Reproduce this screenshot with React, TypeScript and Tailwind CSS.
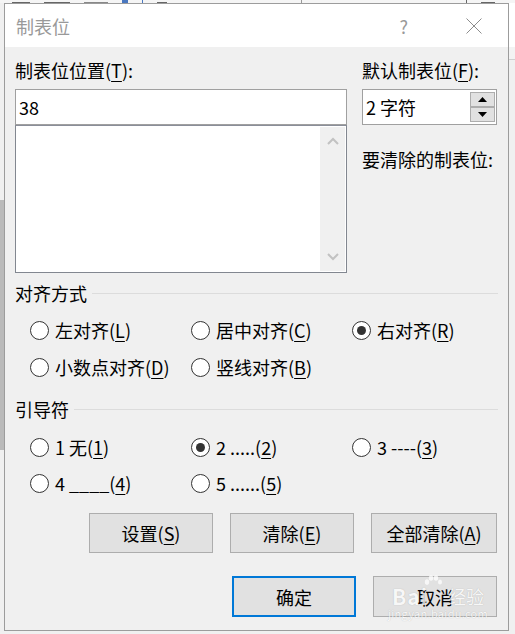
import React from "react";

const FONT = '"Noto Sans CJK SC", "Microsoft YaHei", sans-serif';

function Radio({ checked = false, children }: { checked?: boolean; children: React.ReactNode }) {
  return (
    <div className="flex h-[26px] items-center">
      <span className="flex h-[19px] w-[19px] shrink-0 items-center justify-center rounded-full border border-[#333333] bg-white">
        {checked && <span className="h-[9px] w-[9px] rounded-full bg-[#333333]" />}
      </span>
      <span className="ml-[6px] whitespace-pre text-[18px] leading-[22px] text-black">{children}</span>
    </div>
  );
}

function Btn({ w, focused = false, children }: { w: string; focused?: boolean; children: React.ReactNode }) {
  return (
    <div
      className={`flex items-center justify-center bg-[#e1e1e1] text-[18px] leading-[22px] text-black ${w} ${
        focused ? "border-2 border-[#0078d7]" : "border border-[#adadad]"
      }`}
    >
      {children}
    </div>
  );
}

function GroupHeader({ label }: { label: string }) {
  return (
    <div className="flex h-[22px] items-center pl-[10px] pr-[10px]">
      <span className="text-[18px] leading-[22px] text-black">{label}</span>
      <span className="ml-[5px] h-px flex-1 bg-[#dcdcdc]" />
    </div>
  );
}

const U = ({ children }: { children: React.ReactNode }) => (
  <span className="underline decoration-1 underline-offset-[3px]">{children}</span>
);

export default function App() {
  return (
    <div className="relative flex h-[634px] w-[515px] flex-col overflow-hidden bg-[#f0f0f0]" style={{ fontFamily: FONT }}>
      {/* bits of the window behind */}
      <div className="flex h-[3px] items-end gap-[14px] bg-[#f5f5f5] pl-[12px]">
        <span className="h-px w-[18px] bg-[#666]" />
        <span className="h-px w-[26px] bg-[#666]" />
        <span className="h-px w-[24px] bg-[#888]" />
        <span className="h-[3px] w-[6px] bg-[#4a78c0]" />
        <span className="h-[3px] w-px bg-[#4a78c0]" />
        <span className="h-px w-[10px] bg-[#666]" />
        <span className="ml-[120px] h-[3px] w-px bg-[#999]" />
        <span className="ml-[150px] h-[3px] w-px bg-[#666]" />
        <span className="h-px w-[14px] bg-[#666]" />
      </div>
      <div className="flex flex-1">
        <div className="flex w-[4px] flex-col bg-[#f0f0f0]">
          <span className="mt-[197px] h-[250px] bg-[#bababa]" />
        </div>

        <div className="relative flex h-[628px] w-[505px] flex-col border border-[#9c9c9c] bg-[#f0f0f0]">
          {/* title bar */}
          <div className="flex h-[43px] items-center bg-white pl-[11px]">
            <span className="text-[18px] leading-[24px] text-[#999999]">制表位</span>
            <span className="ml-auto text-[18px] leading-[24px] text-[#999999]">?</span>
            <svg className="ml-[58px] mr-[26px]" width="16" height="16" viewBox="0 0 16 16">
              <path d="M0.5 0.5 L15.5 15.5 M15.5 0.5 L0.5 15.5" stroke="#8c8c8c" strokeWidth="1" fill="none" />
            </svg>
          </div>

          <div className="flex flex-1 flex-col pt-[12px]">
            <div className="flex pl-[10px]">
              <div className="flex w-[332px] flex-col">
                <span className="text-[18px] leading-[22px] text-black">
                  制表位位置(<U>T</U>):
                </span>
                <div className="mt-[8px] flex h-[36px] items-center border border-[#a0a0a0] bg-white pl-[3px] text-[18px] text-black">
                  38
                </div>
                <div className="flex h-[148px] border border-[#828790] border-t-[#8a8e99] bg-white p-px">
                  <div className="flex-1" />
                  <div className="flex w-[25px] flex-col items-center justify-between bg-[#f0f0f0] py-[10px]">
                    <svg width="12" height="8" viewBox="0 0 12 8">
                      <path d="M1 7 L6 2 L11 7" stroke="#c2c2c2" strokeWidth="2" fill="none" />
                    </svg>
                    <svg width="12" height="8" viewBox="0 0 12 8">
                      <path d="M1 1 L6 6 L11 1" stroke="#c2c2c2" strokeWidth="2" fill="none" />
                    </svg>
                  </div>
                </div>
              </div>

              <div className="ml-[15px] flex w-[135px] flex-col">
                <span className="whitespace-nowrap text-[18px] leading-[22px] text-black">
                  默认制表位(<U>F</U>):
                </span>
                <div className="mt-[8px] flex h-[36px] items-center border border-[#a0a0a0] bg-white pl-[3px] pr-px">
                  <span className="flex-1 text-[18px] text-black">2 字符</span>
                  <div className="flex flex-col">
                    <span className="flex h-[15px] w-[25px] items-center justify-center border border-[#adadad] bg-[#e1e1e1]">
                      <svg width="9" height="5" viewBox="0 0 9 5"><path d="M0 5 L4.5 0 L9 5 Z" fill="#000" /></svg>
                    </span>
                    <span className="flex h-[15px] w-[25px] items-center justify-center border border-[#adadad] bg-[#e1e1e1]">
                      <svg width="9" height="5" viewBox="0 0 9 5"><path d="M0 0 L9 0 L4.5 5 Z" fill="#000" /></svg>
                    </span>
                  </div>
                </div>
                <span className="mt-[23px] whitespace-nowrap text-[18px] leading-[22px] text-black">要清除的制表位:</span>
              </div>
            </div>

            <div className="mt-[9px]">
              <GroupHeader label="对齐方式" />
            </div>
            <div className="mt-[13px] grid grid-cols-[161px_161px_161px] gap-y-[11px] pl-[25px]">
              <Radio>左对齐(<U>L</U>)</Radio>
              <Radio>居中对齐(<U>C</U>)</Radio>
              <Radio checked>右对齐(<U>R</U>)</Radio>
              <Radio>小数点对齐(<U>D</U>)</Radio>
              <Radio>竖线对齐(<U>B</U>)</Radio>
            </div>

            <div className="mt-[18px]">
              <GroupHeader label="引导符" />
            </div>
            <div className="mt-[14px] grid grid-cols-[161px_161px_161px] gap-y-[10px] pl-[25px]">
              <Radio>1 无(<U>1</U>)</Radio>
              <Radio checked>2 .....(<U>2</U>)</Radio>
              <Radio>3 ----(<U>3</U>)</Radio>
              <Radio>4 ____(<U>4</U>)</Radio>
              <Radio>5 ......(<U>5</U>)</Radio>
            </div>

            <div className="mt-[17px] flex justify-end gap-[17px] pr-[11px]">
              <Btn w="h-[40px] w-[124px]">设置(<U>S</U>)</Btn>
              <Btn w="h-[40px] w-[124px]">清除(<U>E</U>)</Btn>
              <Btn w="h-[40px] w-[126px]">全部清除(<U>A</U>)</Btn>
            </div>
            <div className="mt-[23px] flex justify-end gap-[17px] pr-[11px]">
              <Btn w="h-[41px] w-[124px]" focused>确定</Btn>
              <Btn w="h-[41px] w-[124px]">取消</Btn>
            </div>
          </div>

          {/* watermark over the cancel button */}
          <div className="pointer-events-none absolute left-[387px] top-[571px] flex w-[92px] flex-col items-center text-white opacity-75 [text-shadow:0_0_1px_rgba(0,0,0,0.3)]">
            <svg width="18" height="14" viewBox="0 0 18 14" className="mb-[-4px] ml-[-10px]">
              <ellipse cx="3" cy="7" rx="2.2" ry="2.8" fill="#fff" />
              <ellipse cx="7" cy="3" rx="2.2" ry="2.8" fill="#fff" />
              <ellipse cx="12" cy="3" rx="2.2" ry="2.8" fill="#fff" />
              <ellipse cx="16" cy="7" rx="2" ry="2.6" fill="#fff" />
            </svg>
            <div className="flex w-full items-end justify-between">
              <span className="text-[21px] font-bold leading-[22px] tracking-[1px]">Bai</span>
              <span className="text-[18px] leading-[22px]">经验</span>
            </div>
            <span className="text-[11px] leading-[12px] tracking-[0.3px]">jingyan.baidu.com</span>
          </div>
        </div>

        <div className="flex flex-1 flex-col">
          <span className="h-[44px] bg-white" />
          <span className="h-[12px] bg-[#f3f3f3]" />
          <span className="h-px bg-[#cfcfcf]" />
          <span className="flex-1 bg-[#f0f0f0]" />
        </div>
      </div>
    </div>
  );
}
